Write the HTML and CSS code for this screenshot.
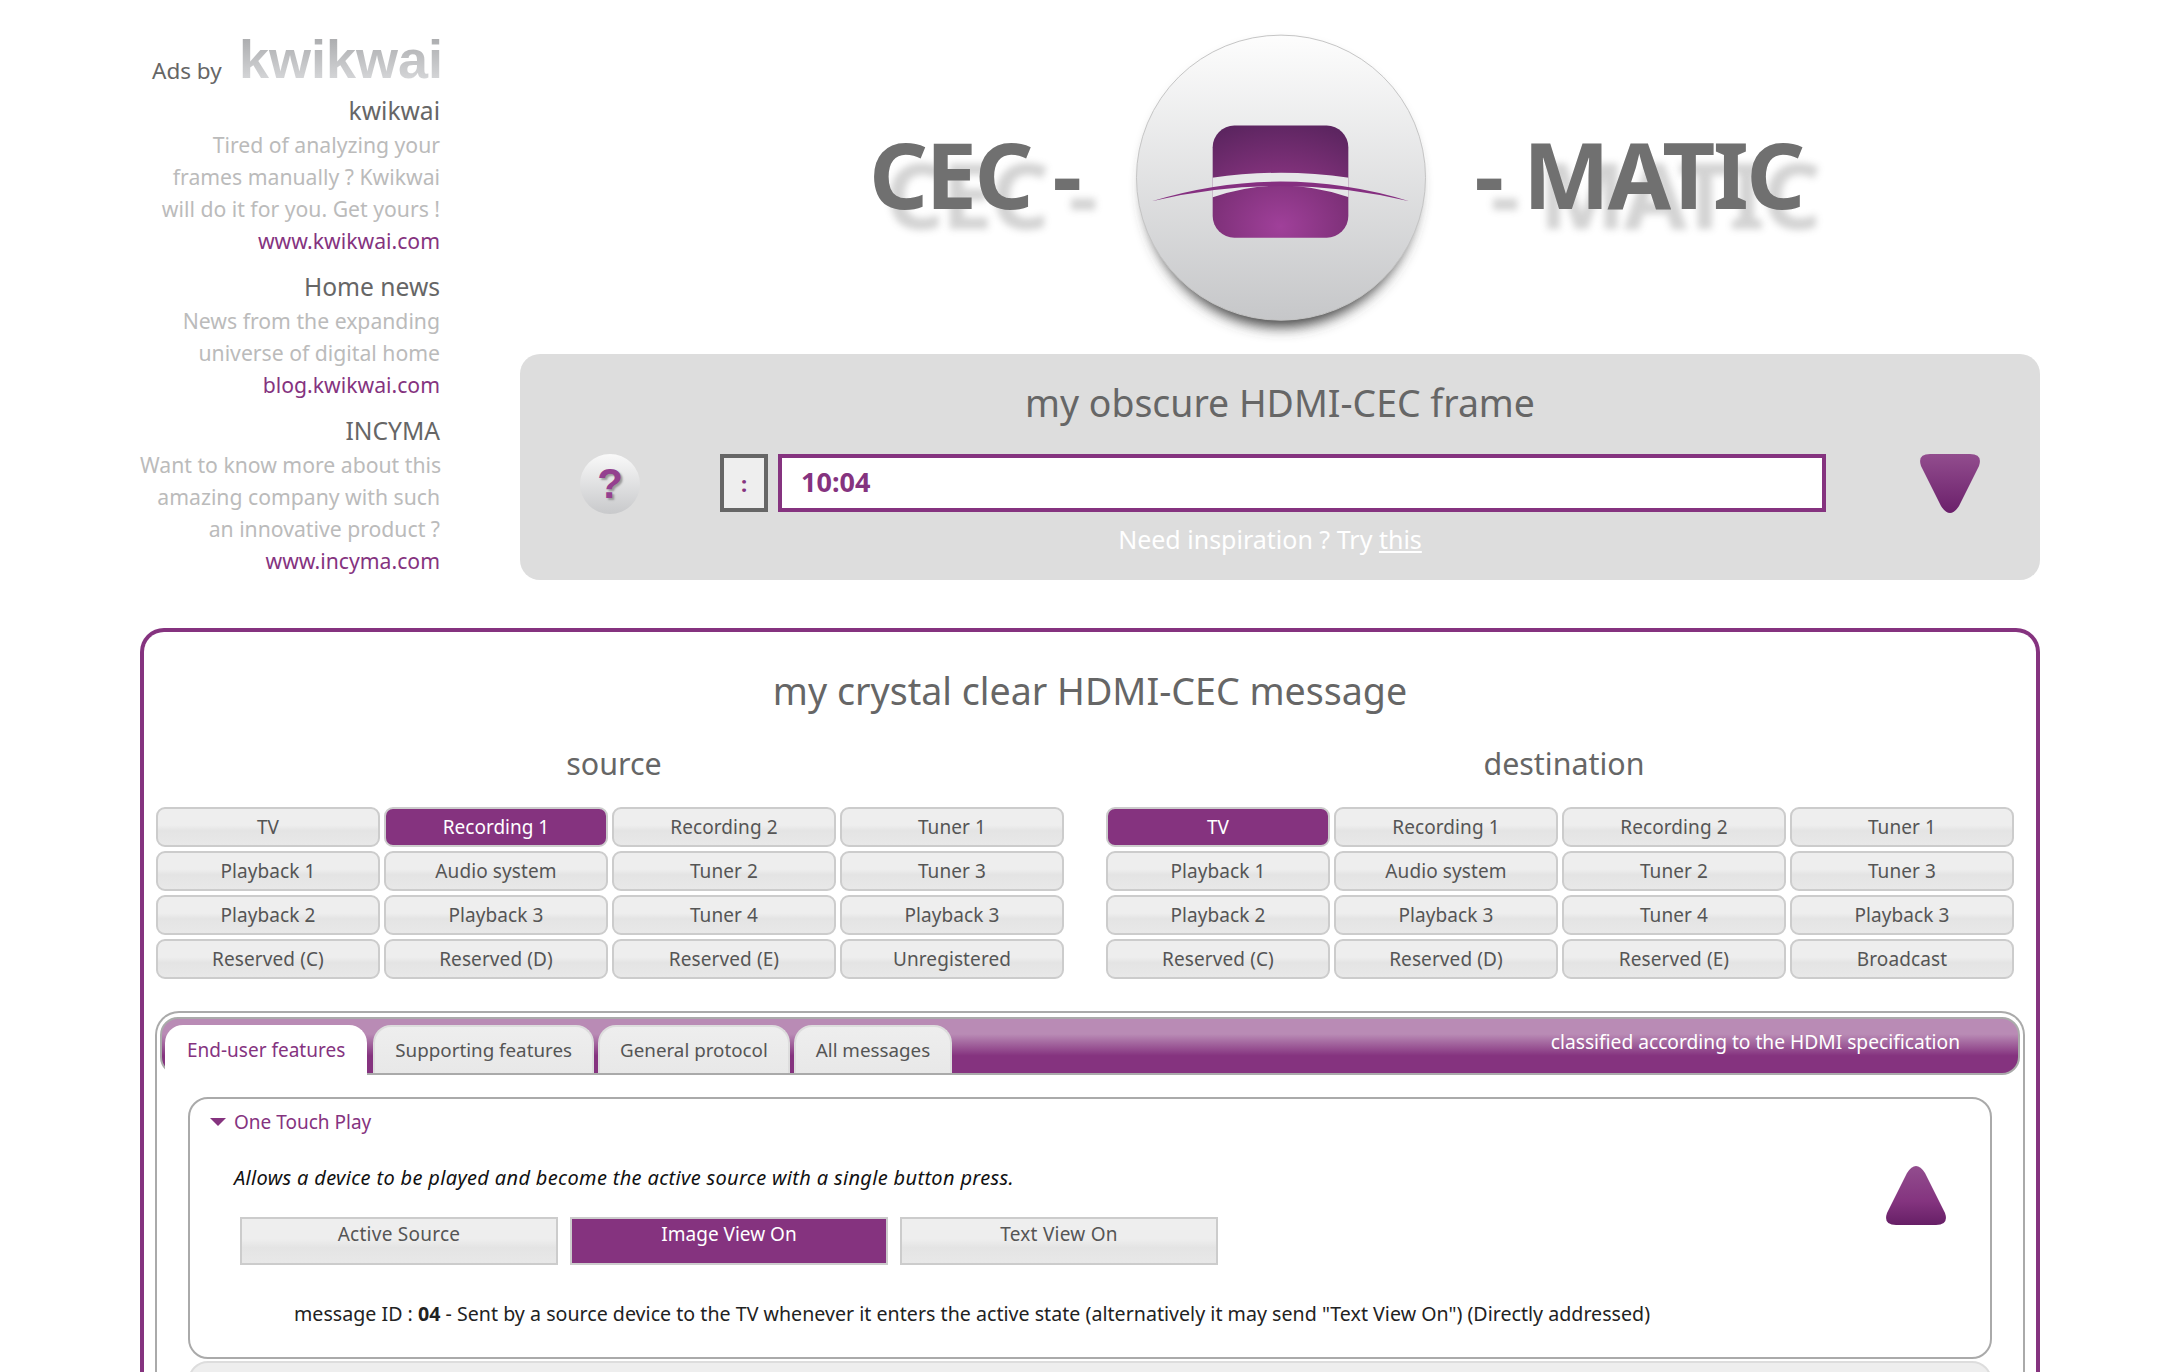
FILE: index.html
```html
<!DOCTYPE html>
<html lang="en">
<head>
<meta charset="utf-8">
<title>CEC-O-MATIC</title>
<link rel="stylesheet" href="styles.css">
</head>
<body>
<div class="page">
  <div class="top">
    <aside class="ads">
      <div class="ads-by"><span>Ads by</span><span class="ads-logo">kwikwai</span></div>
      <h4 class="ad-first">kwikwai</h4>
      <p>Tired of analyzing your<br>frames manually ? Kwikwai<br>will do it for you. Get yours !</p>
      <a href="#">www.kwikwai.com</a>
      <h4>Home news</h4>
      <p>News from the expanding<br>universe of digital home</p>
      <a href="#">blog.kwikwai.com</a>
      <h4>INCYMA</h4>
      <p>Want to know more about this<br>amazing company with such<br>an innovative product ?</p>
      <a href="#">www.incyma.com</a>
    </aside>
    <div class="head">
      <div class="brand">
        <span class="brand-text">CEC -</span>
        <svg class="disc" viewBox="0 0 295 310" width="290" height="305" aria-hidden="true">
          <defs>
            <linearGradient id="discFill" x1="0" y1="0" x2="0" y2="1"><stop offset="0" stop-color="#fdfdfd"/><stop offset="1" stop-color="#c6c7c9"/></linearGradient>
            <radialGradient id="chip" cx="0.5" cy="0.9" r="0.95"><stop offset="0" stop-color="#a0409a"/><stop offset="0.55" stop-color="#7d3078"/><stop offset="1" stop-color="#5c2560"/></radialGradient>
            <filter id="soft" x="-20%" y="-20%" width="140%" height="140%"><feGaussianBlur stdDeviation="7"/></filter>
            <clipPath id="chipClip"><rect x="78" y="92" width="138" height="114" rx="22"/></clipPath>
          </defs>
          <ellipse cx="147.500" cy="155" rx="139" ry="142" fill="#444" filter="url(#soft)"/>
          <ellipse cx="147.500" cy="145" rx="147" ry="145" fill="url(#discFill)" stroke="#c4c4c4"/>
          <rect x="78" y="92" width="138" height="114" rx="22" fill="url(#chip)"/>
          <path d="M60 148 Q147 132 235 148 L235 172 Q147 134 60 172 Z" fill="#e6e6e8" clip-path="url(#chipClip)"/>
          <path d="M16 169 Q147 129 278 169 Q147 138 16 169 Z" fill="#852f80"/>
        </svg>
        <span class="brand-text brand-right">- MATIC</span>
      </div>
      <section class="frame">
        <h2 class="frame-title">my obscure HDMI-CEC frame</h2>
        <div class="frame-row">
          <div class="help">?</div>
          <div class="sep">:</div>
          <div class="frame-input">10:04</div>
          <svg class="tri" viewBox="0 0 60 60" width="60" height="60" aria-hidden="true">
            <defs><linearGradient id="triDown" x1="0" y1="0" x2="0" y2="1"><stop offset="0" stop-color="#924d8e"/><stop offset="1" stop-color="#6b206b"/></linearGradient></defs>
            <path d="M10 0H50Q63 0 59 12L39 52Q30 66 21 52L1 12Q-3 0 10 0Z" fill="url(#triDown)"/>
          </svg>
        </div>
        <p class="inspire">Need inspiration ? Try <a href="#">this</a></p>
      </section>
    </div>
  </div>

  <main class="message">
    <h2 class="message-title">my crystal clear HDMI-CEC message</h2>
    <div class="devices">
      <section class="device">
        <h3>source</h3>
        <div class="device-grid">
          <button class="dev">TV</button><button class="dev on">Recording 1</button><button class="dev">Recording 2</button><button class="dev">Tuner 1</button>
          <button class="dev">Playback 1</button><button class="dev">Audio system</button><button class="dev">Tuner 2</button><button class="dev">Tuner 3</button>
          <button class="dev">Playback 2</button><button class="dev">Playback 3</button><button class="dev">Tuner 4</button><button class="dev">Playback 3</button>
          <button class="dev">Reserved (C)</button><button class="dev">Reserved (D)</button><button class="dev">Reserved (E)</button><button class="dev">Unregistered</button>
        </div>
      </section>
      <section class="device">
        <h3>destination</h3>
        <div class="device-grid">
          <button class="dev on">TV</button><button class="dev">Recording 1</button><button class="dev">Recording 2</button><button class="dev">Tuner 1</button>
          <button class="dev">Playback 1</button><button class="dev">Audio system</button><button class="dev">Tuner 2</button><button class="dev">Tuner 3</button>
          <button class="dev">Playback 2</button><button class="dev">Playback 3</button><button class="dev">Tuner 4</button><button class="dev">Playback 3</button>
          <button class="dev">Reserved (C)</button><button class="dev">Reserved (D)</button><button class="dev">Reserved (E)</button><button class="dev">Broadcast</button>
        </div>
      </section>
    </div>

    <div class="tabs">
      <div class="tabbar">
        <a class="tab active" href="#">End-user features</a>
        <a class="tab" href="#">Supporting features</a>
        <a class="tab" href="#">General protocol</a>
        <a class="tab" href="#">All messages</a>
        <span class="tabnote">classified according to the HDMI specification</span>
      </div>
      <section class="acc">
        <h5 class="acc-head"><span class="caret"></span>One Touch Play</h5>
        <div class="acc-body">
          <div class="acc-main">
            <p class="acc-desc">Allows a device to be played and become the active source with a single button press.</p>
            <div class="msgs">
              <button class="msg">Active Source</button>
              <button class="msg on">Image View On</button>
              <button class="msg">Text View On</button>
            </div>
            <p class="msg-info">message ID : <b>04</b> - Sent by a source device to the TV whenever it enters the active state (alternatively it may send "Text View On") (Directly addressed)</p>
          </div>
          <svg class="tri tri-up" viewBox="0 0 60 60" width="60" height="60" aria-hidden="true">
            <defs><linearGradient id="triUp" x1="0" y1="0" x2="0" y2="1"><stop offset="0" stop-color="#924d8e"/><stop offset="0.6" stop-color="#84347f"/><stop offset="1" stop-color="#661f66"/></linearGradient></defs>
            <path d="M10 60H50Q63 60 59 48L39 8Q30 -6 21 8L1 48Q-3 60 10 60Z" fill="url(#triUp)"/>
          </svg>
        </div>
      </section>
      <section class="acc-closed"></section>
    </div>
  </main>
</div>
</body>
</html>
```

FILE: styles.css
```css
* { box-sizing: border-box; }
html, body { height: 100%; margin: 0; overflow: hidden; background: #fff; }
body { font-family: "Noto Sans", "Liberation Sans", sans-serif; font-size: 19px; color: #666; }
a { color: #85337f; text-decoration: none; }
h2, h3, h4, h5, p { margin: 0; font-weight: 400; }
button { font-family: inherit; font-size: inherit; padding: 0; }

.page { width: 1900px; margin-left: 140px; }
.top { display: flex; height: 628px; }

.ads { width: 300px; padding-top: 35px; text-align: right; line-height: 32px; color: #bbb; font-size: 21.2px; white-space: nowrap; flex: none; }
.ads a { display: block; }
.ads-by { display: flex; justify-content: space-between; align-items: flex-end; padding-left: 12px; height: 48px; color: #666; font-size: 22.5px; }
.ads-by span:first-child { line-height: 32px; margin-bottom: -4px; }
.ads-logo { font: 700 54px/48px "Liberation Sans", sans-serif; color: transparent; background: linear-gradient(#a9aaac, #d8d9db); -webkit-background-clip: text; background-clip: text; margin-right: -3px; }
.ads h4 { font-size: 24.6px; color: #666; line-height: 36px; margin-top: 12px; }
.ads h4.ad-first { margin-top: 10px; }

.head { width: 1520px; margin-left: 80px; flex: none; }
.brand { display: flex; align-items: flex-start; height: 354px; padding-left: 349px; padding-top: 35px; gap: 56px; }
.brand-text { font-weight: 700; font-size: 92px; line-height: 92px; letter-spacing: -2.5px; color: #707070; margin-top: 93px; white-space: nowrap; text-shadow: 16px 20px 7px rgba(110,110,110,.3); }
.brand-right { letter-spacing: -2.4px; margin-left: -7px; }
.disc { flex: none; overflow: visible; }

.frame { height: 226px; background: #ddd; border-radius: 20px; padding-top: 24px; text-align: center; }
.frame-title { font-size: 37.4px; line-height: 50px; color: #666; }
.frame-row { display: flex; align-items: flex-start; margin-top: 26px; padding-left: 60px; }
.help { width: 60px; height: 60px; border-radius: 50%; background: linear-gradient(#f9f9f9, #c8c9cb); color: #94408f; font: 700 42px/60px "Liberation Sans", sans-serif; text-shadow: 2px 2px 2px #999; flex: none; }
.sep { width: 48px; height: 58px; margin-left: 80px; border: 4px solid #666; background: #eee; color: #85337f; font-weight: 700; font-size: 22px; line-height: 50px; flex: none; }
.frame-input { width: 1048px; height: 58px; margin-left: 10px; border: 4px solid #85337f; background: #fff; color: #85337f; font-weight: 700; font-size: 27px; line-height: 48px; text-align: left; padding-left: 19px; flex: none; }
.frame-row .tri { margin-left: 94px; flex: none; }
.inspire { color: #fff; font-size: 25px; line-height: 34px; margin-top: 8px; padding-right: 20px; }
.inspire a { color: #fff; text-decoration: underline; }

.message { border: 4px solid #85337f; border-bottom: 0; border-radius: 24px 24px 0 0; padding: 0 11px; height: 900px; }
.message-title { font-size: 37.6px; line-height: 50px; text-align: center; padding-top: 34px; }
.devices { display: flex; gap: 42px; padding-left: 1px; margin-top: 28px; }
.device { width: 908px; }
.device h3 { font-size: 30.4px; line-height: 40px; text-align: center; color: #666; padding-left: 8px; }
.device-grid { display: grid; grid-template-columns: repeat(4, 224px); grid-auto-rows: 40px; gap: 4px; margin-top: 23px; }
.dev { border: 2px solid #ccc; border-radius: 9px; background: linear-gradient(#eee 0, #eee 45%, #e4e4e4 60%, #e8e8e8 100%); color: #555; font-size: 19px; letter-spacing: .1px; line-height: 32px; padding-bottom: 1px; }
.dev.on { background: #85337f; color: #fff; letter-spacing: 0; }

.tabs { border: 2px solid #aaa; border-radius: 24px 24px 0 0; border-bottom: 0; margin-top: 32px; padding: 4px 3px 0 3px; height: 400px; }
.tabbar { display: flex; align-items: flex-end; gap: 4px; height: 58px; padding-left: 3px; border: 2px solid #aaa; border-radius: 18px; background: linear-gradient(#b98bb5 0, #b98bb5 28%, #85337f 68%, #85337f 100%); }
.tab { height: 48px; padding: 0 20px; border: 2px solid #ddd; border-bottom: 0; border-radius: 18px 18px 0 0; background: linear-gradient(#eee, #e8e8e8); color: #555; font-size: 18.8px; line-height: 46px; white-space: nowrap; }
.tab.active { background: #fff; border-color: #fff; color: #85337f; font-size: 19px; height: 50px; margin-bottom: -2px; margin-right: 2px; }
.tabnote { margin-left: auto; margin-right: 58px; align-self: flex-start; color: #fff; font-size: 19.2px; line-height: 46px; }

.acc { margin: 22px 28px 0; height: 262px; border: 2px solid #aaa; border-radius: 20px; padding: 0 44px 0 44px; }
.acc-head { display: flex; align-items: center; height: 46px; font-size: 19px; color: #85337f; margin-left: -24px; }
.caret { width: 0; height: 0; margin-right: 8px; border: 8px solid transparent; border-top: 8px solid #85337f; border-bottom: 0; }
.acc-body { display: flex; justify-content: space-between; }
.acc-desc { font-style: italic; font-size: 20px; letter-spacing: .33px; color: #111; line-height: 32px; margin-top: 17px; }
.msgs { display: flex; gap: 12px; margin-top: 23px; margin-left: 6px; }
.msg { width: 318px; height: 48px; border: 2px solid #ccc; background: linear-gradient(#eee 0, #eee 45%, #e4e4e4 65%, #e8e8e8 100%); color: #555; letter-spacing: .25px; line-height: 30px; padding-bottom: 14px; }
.msg.on { background: #85337f; color: #fff; letter-spacing: 0; }
.msg-info { color: #222; font-size: 19.6px; letter-spacing: .02px; line-height: 32px; margin-top: 33px; margin-left: 60px; }
.tri-up { margin-top: 20px; flex: none; }
.acc-closed { height: 60px; margin: 2px 28px 0; border: 2px solid #ddd; border-radius: 20px; background: #eee; }
```
